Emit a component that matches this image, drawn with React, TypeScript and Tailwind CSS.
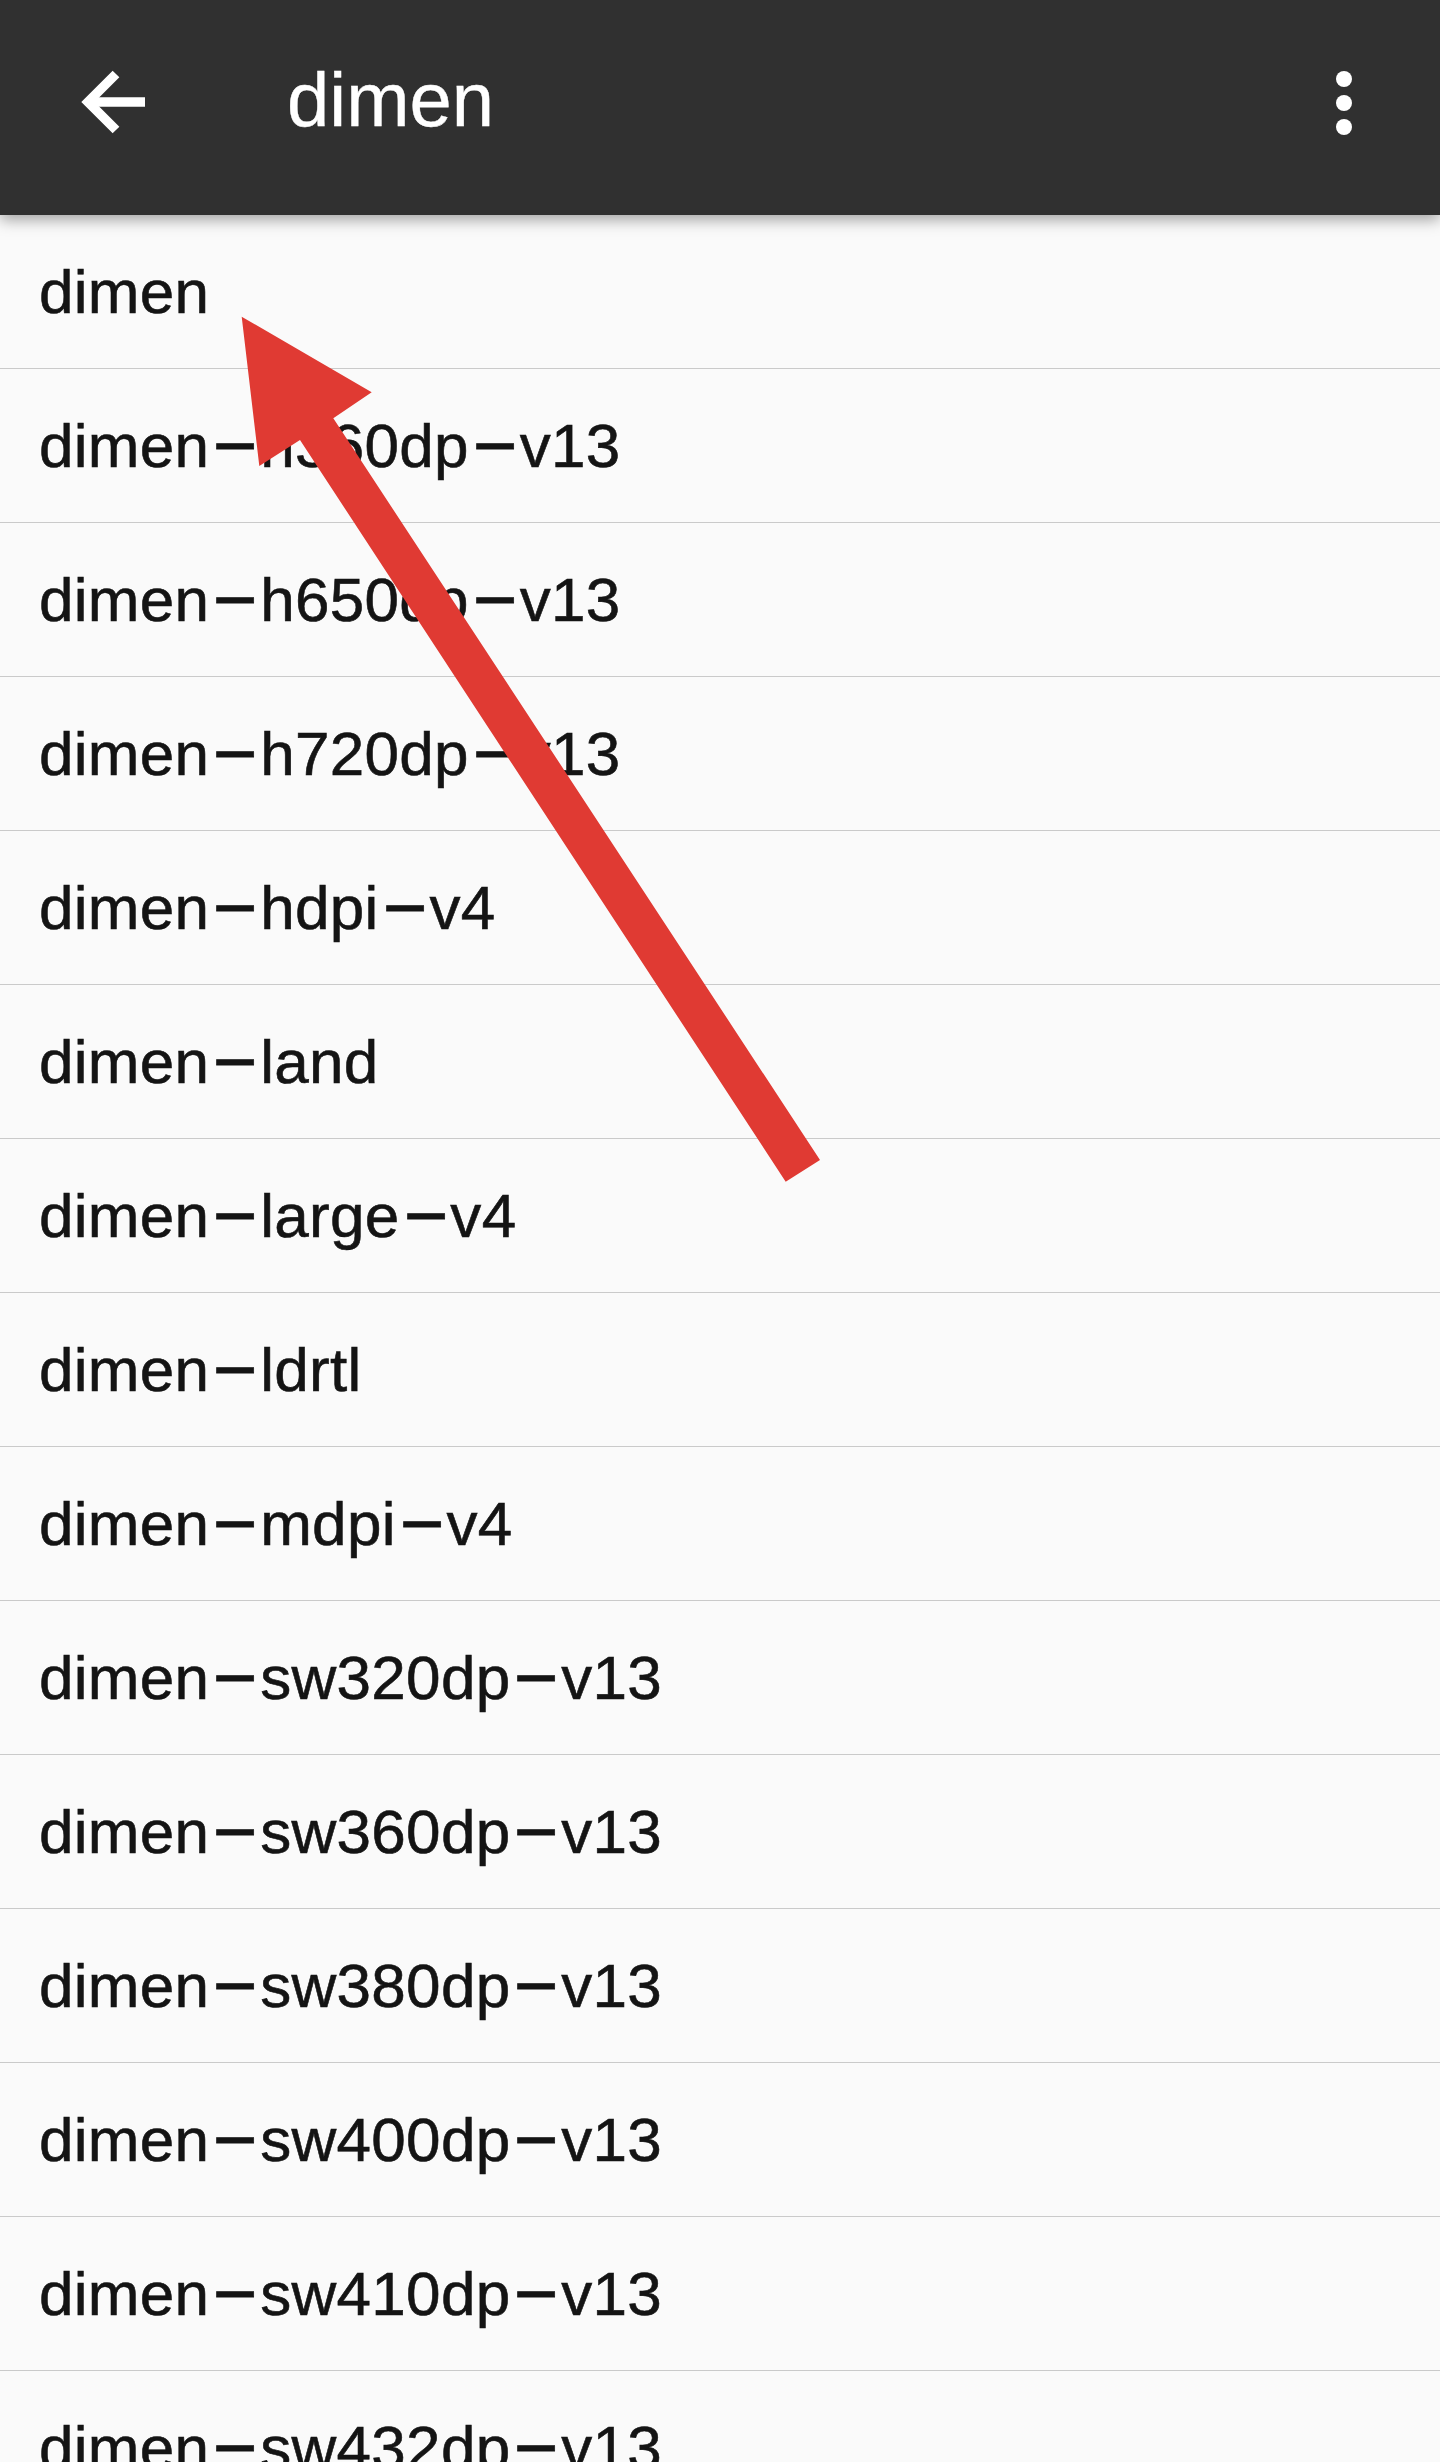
const folders = [
  'dimen',
  'dimen-h360dp-v13',
  'dimen-h650dp-v13',
  'dimen-h720dp-v13',
  'dimen-hdpi-v4',
  'dimen-land',
  'dimen-large-v4',
  'dimen-ldrtl',
  'dimen-mdpi-v4',
  'dimen-sw320dp-v13',
  'dimen-sw360dp-v13',
  'dimen-sw380dp-v13',
  'dimen-sw400dp-v13',
  'dimen-sw410dp-v13',
  'dimen-sw432dp-v13',
];

function FolderName({ name }: { name: string }) {
  const parts = name.split('-');
  return (
    <span>
      {parts.map((p, i) => (
        <span key={i}>
          {i > 0 && (
            <span className="inline-block leading-none ml-[9px] mr-[7px] align-[6px] scale-x-[1.08] scale-y-[1.3]">–</span>
          )}
          {p}
        </span>
      ))}
    </span>
  );
}

function AppBar() {
  return (
    <header className="relative z-10 flex items-start h-[215px] bg-[#303030] shadow-[0_5px_14px_rgba(0,0,0,0.35)]">
      {/* back */}
      <div className="ml-[64px] mt-[54px] w-[96px] h-[96px]">
        <svg viewBox="0 0 96 96" className="w-full h-full" fill="none" stroke="#ffffff" strokeWidth={9.5}>
          <path d="M81 48H24" strokeLinecap="butt" />
          <path d="M52 20L24 48L52 76" strokeLinecap="butt" strokeLinejoin="miter" />
        </svg>
      </div>
      <h1 className="ml-[127px] mt-[62px] text-[76px] leading-none text-white [-webkit-text-stroke:0.4px_#ffffff]">
        dimen
      </h1>
      <div className="flex-1" />
      {/* overflow menu */}
      <div className="mr-[48px] mt-[55px] w-[96px] h-[96px]">
        <svg viewBox="0 0 96 96" className="w-full h-full" fill="#ffffff">
          <circle cx="48" cy="24" r="8" />
          <circle cx="48" cy="48" r="8" />
          <circle cx="48" cy="72" r="8" />
        </svg>
      </div>
    </header>
  );
}

export default function App() {
  return (
    <div className="relative w-[1440px] h-[2462px] overflow-hidden bg-[#fafafa] font-['Liberation_Sans',Arial,sans-serif]">
      <AppBar />
      <ul>
        {folders.map(f => (
          <li
            key={f}
            className="h-[154px] pl-[39px] border-b border-[#cacaca] text-[62px] tracking-[0.3px] leading-[153px] text-[#141414] whitespace-nowrap [-webkit-text-stroke:0.6px_#141414]"
          >
            <FolderName name={f} />
          </li>
        ))}
      </ul>

      {/* annotation arrow */}
      <svg
        className="absolute inset-0 pointer-events-none z-20"
        width="1440"
        height="2462"
        viewBox="0 0 1440 2462"
      >
        <polygon
          fill="#e03a33"
          points="241.7,316.7 371.7,392.3 333.3,418.3 820,1160 785.7,1181.7 300,440 259.3,466"
        />
      </svg>
    </div>
  );
}
